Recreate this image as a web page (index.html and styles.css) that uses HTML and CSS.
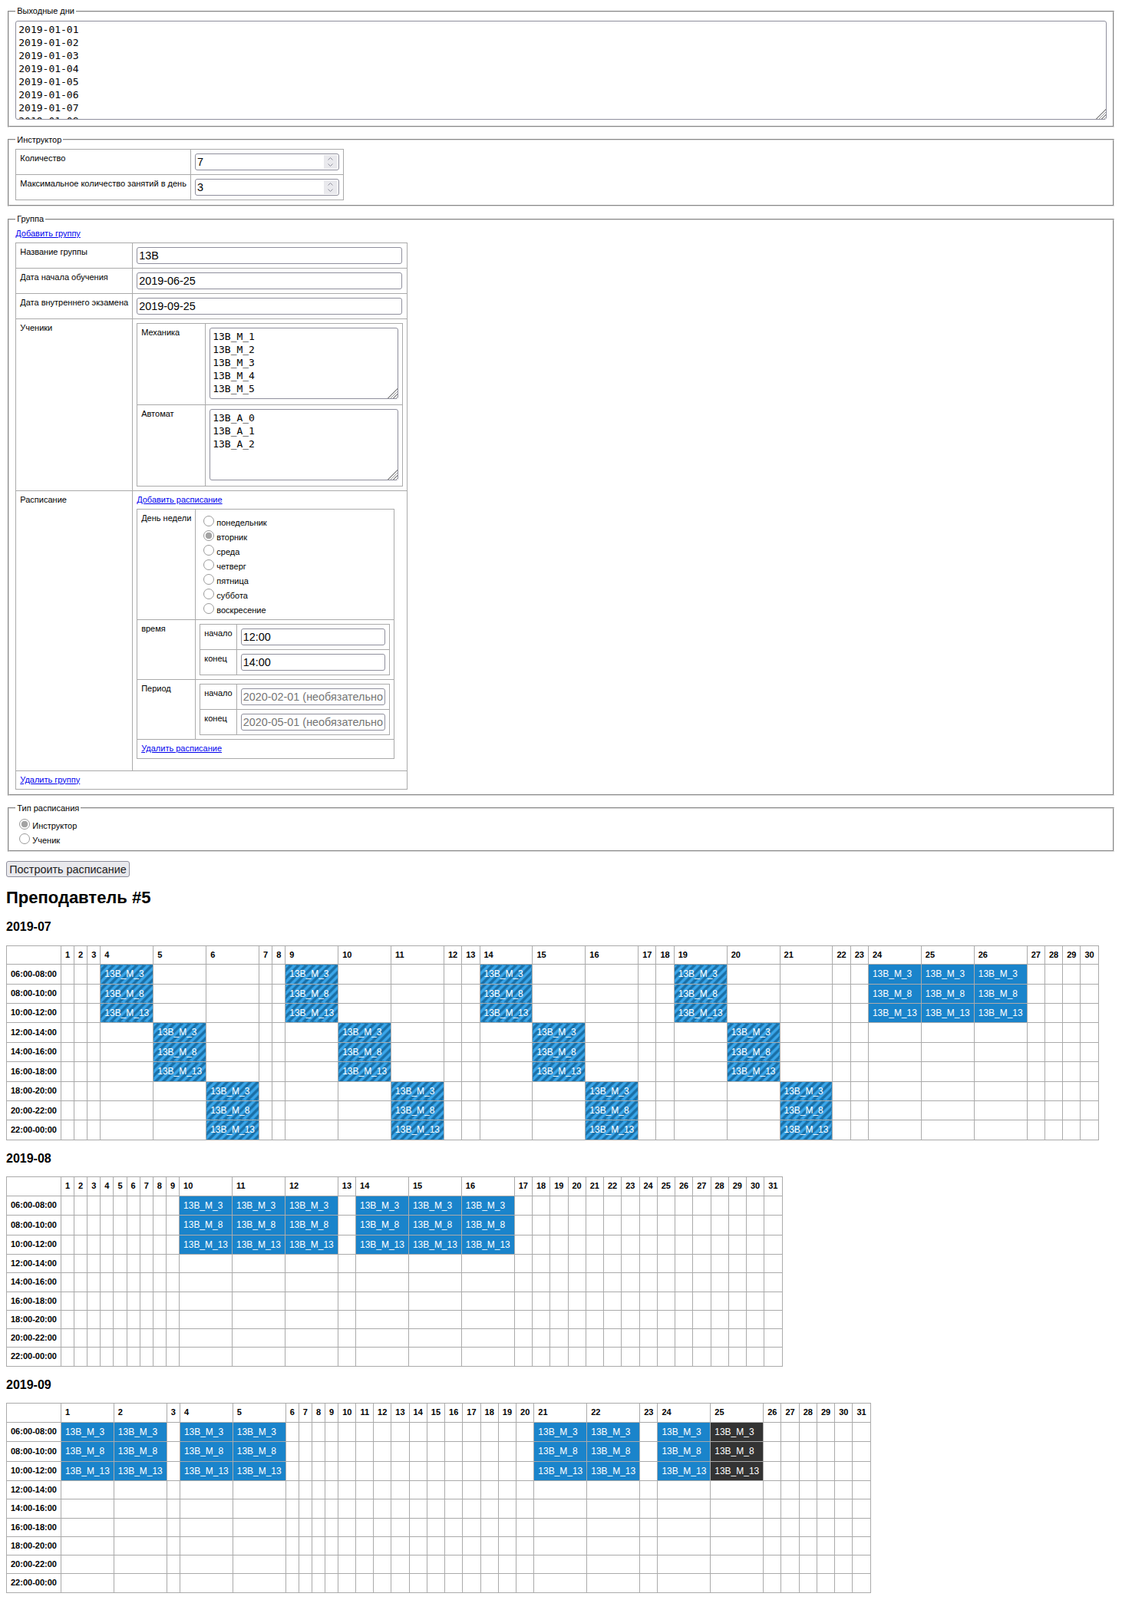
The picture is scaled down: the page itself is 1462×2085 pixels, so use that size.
FILE: index.html
```html
<!DOCTYPE html>
<html lang="ru">

<head>
    <meta charset="utf-8">
    <title>Расписание</title>
    <link rel="stylesheet" href="styles.css">
</head>

<body>
    <form>
        <fieldset>
            <legend>Выходные дни</legend>
            <textarea class="holidays" spellcheck="false">2019-01-01
2019-01-02
2019-01-03
2019-01-04
2019-01-05
2019-01-06
2019-01-07
2019-01-08</textarea>
        </fieldset>

        <fieldset>
            <legend>Инструктор</legend>
            <table class="grid">
                <tr>
                    <td>Количество</td>
                    <td>
                        <span class="spin-wrap">
                            <input class="field-short" type="number" value="7">
                            <svg class="spin" width="17" height="18" viewBox="0 0 17 18" aria-hidden="true">
                                <rect width="17" height="18" fill="#e9e9ed"/>
                                <path d="M5.5 6.5 8.5 3.5 11.5 6.5M5.5 11.5 8.5 14.5 11.5 11.5" fill="none" stroke="#8f8f9d" stroke-width="1"/>
                            </svg>
                        </span>
                    </td>
                </tr>
                <tr>
                    <td>Максимальное количество занятий в день</td>
                    <td>
                        <span class="spin-wrap">
                            <input class="field-short" type="number" value="3">
                            <svg class="spin" width="17" height="18" viewBox="0 0 17 18" aria-hidden="true">
                                <rect width="17" height="18" fill="#e9e9ed"/>
                                <path d="M5.5 6.5 8.5 3.5 11.5 6.5M5.5 11.5 8.5 14.5 11.5 11.5" fill="none" stroke="#8f8f9d" stroke-width="1"/>
                            </svg>
                        </span>
                    </td>
                </tr>
            </table>
        </fieldset>

        <fieldset>
            <legend>Группа</legend>
            <div class="link-row"><a href="#">Добавить группу</a></div>
            <table class="grid">
                <tr>
                    <td>Название группы</td>
                    <td><input class="field-long" type="text" value="13В"></td>
                </tr>
                <tr>
                    <td>Дата начала обучения</td>
                    <td><input class="field-long" type="text" value="2019-06-25"></td>
                </tr>
                <tr>
                    <td>Дата внутреннего экзамена</td>
                    <td><input class="field-long" type="text" value="2019-09-25"></td>
                </tr>
                <tr>
                    <td>Ученики</td>
                    <td>
                        <table class="grid students">
                            <tr>
                                <td class="students-label">Механика</td>
                                <td><textarea class="names" spellcheck="false">13В_М_1
13В_М_2
13В_М_3
13В_М_4
13В_М_5</textarea></td>
                            </tr>
                            <tr>
                                <td class="students-label">Автомат</td>
                                <td><textarea class="names" spellcheck="false">13В_А_0
13В_А_1
13В_А_2</textarea></td>
                            </tr>
                        </table>
                    </td>
                </tr>
                <tr>
                    <td>Расписание</td>
                    <td class="schedule-cell">
                        <div class="link-row"><a href="#">Добавить расписание</a></div>
                        <table class="grid">
                            <tr>
                                <td>День недели</td>
                                <td>
                                    <label class="radio-row"><input type="radio" name="day">понедельник</label>
                                    <label class="radio-row"><input type="radio" name="day" checked>вторник</label>
                                    <label class="radio-row"><input type="radio" name="day">среда</label>
                                    <label class="radio-row"><input type="radio" name="day">четверг</label>
                                    <label class="radio-row"><input type="radio" name="day">пятница</label>
                                    <label class="radio-row"><input type="radio" name="day">суббота</label>
                                    <label class="radio-row"><input type="radio" name="day">воскресение</label>
                                </td>
                            </tr>
                            <tr>
                                <td>время</td>
                                <td>
                                    <table class="grid">
                                        <tr>
                                            <td>начало</td>
                                            <td><input class="field-short" type="text" value="12:00"></td>
                                        </tr>
                                        <tr>
                                            <td>конец</td>
                                            <td><input class="field-short" type="text" value="14:00"></td>
                                        </tr>
                                    </table>
                                </td>
                            </tr>
                            <tr>
                                <td>Период</td>
                                <td>
                                    <table class="grid">
                                        <tr>
                                            <td>начало</td>
                                            <td><input class="field-short" type="text" placeholder="2020-02-01 (необязательно)"></td>
                                        </tr>
                                        <tr>
                                            <td>конец</td>
                                            <td><input class="field-short" type="text" placeholder="2020-05-01 (необязательно)"></td>
                                        </tr>
                                    </table>
                                </td>
                            </tr>
                            <tr>
                                <td colspan="2"><a href="#">Удалить расписание</a></td>
                            </tr>
                        </table>
                    </td>
                </tr>
                <tr>
                    <td colspan="2"><a href="#">Удалить группу</a></td>
                </tr>
            </table>
        </fieldset>

        <fieldset class="type-box">
            <legend>Тип расписания</legend>
            <label class="radio-row"><input type="radio" name="type" checked>Инструктор</label>
            <label class="radio-row"><input type="radio" name="type">Ученик</label>
        </fieldset>

        <button class="build" type="button">Построить расписание</button>
    </form>

    <h1>Преподавтель #5</h1>
    <div id="months"></div>

    <script src="schedule.js"></script>
</body>

</html>
```

FILE: styles.css
```css
body {
    margin: 8px;
    font-family: "Liberation Sans", Arial, sans-serif;
    font-size: 11px;
    line-height: 1.2;
    color: #000;
    background: #fff;
}

fieldset {
    margin: 0 2px 10px;
    padding: 5.5px 8.25px 6px;
    border: 2px groove #dcdcdc;
}

legend {
    padding: 0 2px;
}

a {
    color: #0000ee;
}

.link-row {
    margin-bottom: 5px;
}

.type-box {
    padding-top: 4px;
    padding-bottom: 6px;
}

/* tables */
table {
    border-collapse: collapse;
}

.grid td {
    padding: 5px;
    border: 1px solid #aaa;
    vertical-align: top;
}

.students {
    width: 100%;
}

.grid .students-label {
    width: 78px;
}

.grid .schedule-cell {
    padding-bottom: 15px;
}

/* form controls */
input[type="text"],
input[type="number"] {
    box-sizing: border-box;
    display: block;
    height: 22px;
    padding: 1px 2px;
    border: 1px solid #8f8f9d;
    border-radius: 3px;
    font-family: "Liberation Sans", Arial, sans-serif;
    font-size: 14.4px;
    color: #000;
}

input::placeholder {
    color: #757575;
    opacity: 1;
}

input[type="number"]::-webkit-inner-spin-button {
    -webkit-appearance: none;
}

.field-short {
    width: 188px;
}

.field-long {
    width: 346px;
}

textarea {
    display: block;
    box-sizing: border-box;
    padding: 2px 3px;
    border: 1px solid #8f8f9d;
    border-radius: 3px;
    font-family: "DejaVu Sans Mono", "Liberation Mono", monospace;
    font-size: 13px;
    line-height: 17px;
    overflow: hidden;
    resize: both;
}

textarea::-webkit-resizer {
    background:
        linear-gradient(135deg, #fff 50%, transparent 50%),
        repeating-linear-gradient(135deg, #999 0, #999 1px, #fff 1px, #fff 2.4px);
}

.holidays {
    width: 100%;
    height: 129px;
    margin-bottom: 2px;
}

.names {
    width: 245.5px;
    height: 93px;
    margin-bottom: 2px;
}

.spin-wrap {
    position: relative;
    display: block;
}

.spin {
    position: absolute;
    top: 2px;
    right: 3px;
}

.radio-row {
    display: flex;
    align-items: flex-end;
    height: 19px;
}

.radio-row input {
    appearance: none;
    box-sizing: border-box;
    flex: none;
    align-self: flex-start;
    width: 14px;
    height: 14px;
    margin: 3px 3px 0 5px;
    border: 1px solid #9a9a9a;
    border-radius: 50%;
    background: #fff;
}

.radio-row input:checked {
    background: radial-gradient(circle, #a3a3a3 0, #a3a3a3 4px, #fff 4.6px);
}

.build {
    display: block;
    box-sizing: border-box;
    width: 161px;
    height: 21px;
    margin-top: 12px;
    padding: 0;
    border: 1px solid #8f8f9d;
    border-radius: 3px;
    background: #e9e9ed;
    font-family: "Liberation Sans", Arial, sans-serif;
    font-size: 14.4px;
    color: #222;
}

h1 {
    margin: 14px 0 15px;
    font-size: 22px;
}

h2 {
    margin: 14.25px 0;
    font-size: 16px;
}

/* month calendars */
.month th,
.month td {
    padding: 5px;
    border: 1px solid #aaa;
    text-align: left;
    line-height: 13.3px;
}

.month th {
    font-size: 11px;
    font-weight: bold;
}

.month .lesson {
    font-size: 11.97px;
    line-height: 14.4px;
    color: #fff;
}

.month .plain {
    background: #1a84cb;
}

.month .dark {
    background: #333;
}

.month .striped {
    background: repeating-linear-gradient(135deg, #3aa6ea 0, #3aa6ea 3.5px, #1a6fa6 3.5px, #1a6fa6 7px);
}
```

FILE: schedule.js
```js
var SLOTS = ["06:00-08:00", "08:00-10:00", "10:00-12:00", "12:00-14:00", "14:00-16:00",
    "16:00-18:00", "18:00-20:00", "20:00-22:00", "22:00-00:00"];
var NAMES = ["13В_М_3", "13В_М_8", "13В_М_13"];

// each lesson block: day of month, first slot, kind
var MONTHS = [
    {
        title: "2019-07",
        days: 30,
        blocks: [
            [4, 0, "striped"], [9, 0, "striped"], [14, 0, "striped"], [19, 0, "striped"],
            [5, 3, "striped"], [10, 3, "striped"], [15, 3, "striped"], [20, 3, "striped"],
            [6, 6, "striped"], [11, 6, "striped"], [16, 6, "striped"], [21, 6, "striped"],
            [24, 0, "plain"], [25, 0, "plain"], [26, 0, "plain"]
        ]
    },
    {
        title: "2019-08",
        days: 31,
        blocks: [
            [10, 0, "plain"], [11, 0, "plain"], [12, 0, "plain"],
            [14, 0, "plain"], [15, 0, "plain"], [16, 0, "plain"]
        ]
    },
    {
        title: "2019-09",
        days: 31,
        blocks: [
            [1, 0, "plain"], [2, 0, "plain"], [4, 0, "plain"], [5, 0, "plain"],
            [21, 0, "plain"], [22, 0, "plain"], [24, 0, "plain"], [25, 0, "dark"]
        ]
    }
];

function buildMonth(month) {
    var html = "<h2>" + month.title + "</h2><table class=\"month\"><tr><th></th>";
    for (var d = 1; d <= month.days; d++) {
        html += "<th>" + d + "</th>";
    }
    html += "</tr>";

    SLOTS.forEach(function (slot, row) {
        html += "<tr><th>" + slot + "</th>";
        for (var d = 1; d <= month.days; d++) {
            var block = month.blocks.find(function (b) {
                return b[0] === d && row >= b[1] && row < b[1] + NAMES.length;
            });
            if (block) {
                html += "<td class=\"lesson " + block[2] + "\">" + NAMES[row - block[1]] + "</td>";
            } else {
                html += "<td></td>";
            }
        }
        html += "</tr>";
    });

    return html + "</table>";
}

document.getElementById("months").innerHTML = MONTHS.map(buildMonth).join("");
```
